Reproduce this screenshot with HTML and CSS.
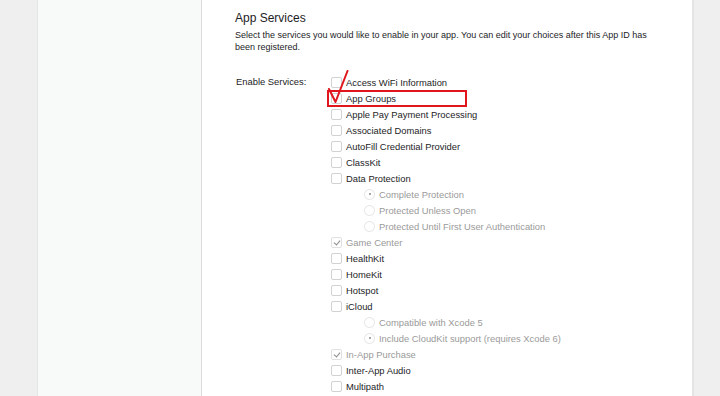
FILE: index.html
```html
<!DOCTYPE html>
<html lang="en">
<head>
    <meta charset="UTF-8">
    <title>App Services</title>
    <link rel="stylesheet" href="styles.css">
</head>
<body>
    <div class="gutter"></div>
    <aside class="sidebar"></aside>
    <main class="content">
        <h2>App Services</h2>
        <p class="intro">Select the services you would like to enable in your app. You can edit your choices after this App ID has been registered.</p>
        <div class="services">
            <div class="label">Enable Services:</div>
            <ul class="list">
                <li class="row"><span class="box"></span>Access WiFi Information</li>
                <li class="row"><span class="box"></span>App Groups</li>
                <li class="row"><span class="box"></span>Apple Pay Payment Processing</li>
                <li class="row"><span class="box"></span>Associated Domains</li>
                <li class="row"><span class="box"></span>AutoFill Credential Provider</li>
                <li class="row"><span class="box"></span>ClassKit</li>
                <li class="row"><span class="box"></span>Data Protection</li>
                <li class="row sub off"><span class="radio on"></span>Complete Protection</li>
                <li class="row sub off"><span class="radio"></span>Protected Unless Open</li>
                <li class="row sub off"><span class="radio"></span>Protected Until First User Authentication</li>
                <li class="row off"><span class="box checked"></span>Game Center</li>
                <li class="row"><span class="box"></span>HealthKit</li>
                <li class="row"><span class="box"></span>HomeKit</li>
                <li class="row"><span class="box"></span>Hotspot</li>
                <li class="row"><span class="box"></span>iCloud</li>
                <li class="row sub off"><span class="radio"></span>Compatible with Xcode 5</li>
                <li class="row sub off"><span class="radio on"></span>Include CloudKit support (requires Xcode 6)</li>
                <li class="row off"><span class="box checked"></span>In-App Purchase</li>
                <li class="row"><span class="box"></span>Inter-App Audio</li>
                <li class="row"><span class="box"></span>Multipath</li>
            </ul>
            <!-- annotation drawn over the form -->
            <div class="mark-box"></div>
            <svg class="mark-tick" width="30" height="40" viewBox="0 0 30 40">
                <path d="M2 19 L8.5 32 L20.5 1" fill="none" stroke="#e0161e" stroke-width="2" stroke-linecap="round" stroke-linejoin="round"/>
            </svg>
        </div>
    </main>
    <div class="gutter right"></div>
</body>
</html>
```

FILE: styles.css
```css
* {
    margin: 0;
    padding: 0;
    box-sizing: border-box;
}

body {
    font-family: "Liberation Sans", Arial, sans-serif;
    color: #1d1d1f;
    background: #efefef;
    height: 396px;
    overflow: hidden;
    display: flex;
}

.gutter {
    width: 37px;
    flex: none;
}

.gutter.right {
    flex: 1;
}

.sidebar {
    width: 165px;
    flex: none;
    background: #f8f9f9;
    border-left: 1px solid #e4e4e4;
    border-right: 1px solid #dcdcdc;
}

.content {
    width: 492px;
    flex: none;
    background: #fff;
    border-right: 2px solid #e4e4e4;
    padding: 10px 0 0 33px;
}

h2 {
    font-size: 12px;
    font-weight: normal;
    line-height: 16px;
    margin-bottom: 3px;
}

.intro {
    font-size: 9px;
    line-height: 12px;
    width: 425px;
}

.services {
    position: relative;
    display: grid;
    grid-template-columns: 96px 1fr;
    margin-top: 21px;
    font-size: 9.4px;
}

.label {
    line-height: 16px;
    padding-left: 1px;
}

.list {
    list-style: none;
}

.row {
    height: 16px;
    display: flex;
    align-items: center;
}

.row.sub {
    padding-left: 33px;
}

.row.off {
    color: #9a9a9a;
}

.box {
    width: 11px;
    height: 11px;
    border: 1px solid #d2d2d2;
    border-radius: 2px;
    margin-right: 4px;
    position: relative;
}

.box.checked {
    border-color: #e0e0e0;
}

.box.checked::after {
    content: "";
    position: absolute;
    left: 3px;
    top: 1px;
    width: 3px;
    height: 5px;
    border: solid #8a8a8a;
    border-width: 0 1px 1px 0;
    transform: rotate(40deg);
}

.radio {
    width: 11px;
    height: 11px;
    border: 1px solid #e4e4e4;
    border-radius: 50%;
    margin-right: 4px;
    position: relative;
}

.radio.on::after {
    content: "";
    position: absolute;
    left: 3.5px;
    top: 3.5px;
    width: 2px;
    height: 2px;
    border-radius: 50%;
    background: #8a8a8a;
}

.mark-box {
    position: absolute;
    left: 92px;
    top: 16px;
    width: 140px;
    height: 17px;
    border: 2px solid #e0161e;
}

.mark-tick {
    position: absolute;
    left: 92px;
    top: -4px;
}
```
